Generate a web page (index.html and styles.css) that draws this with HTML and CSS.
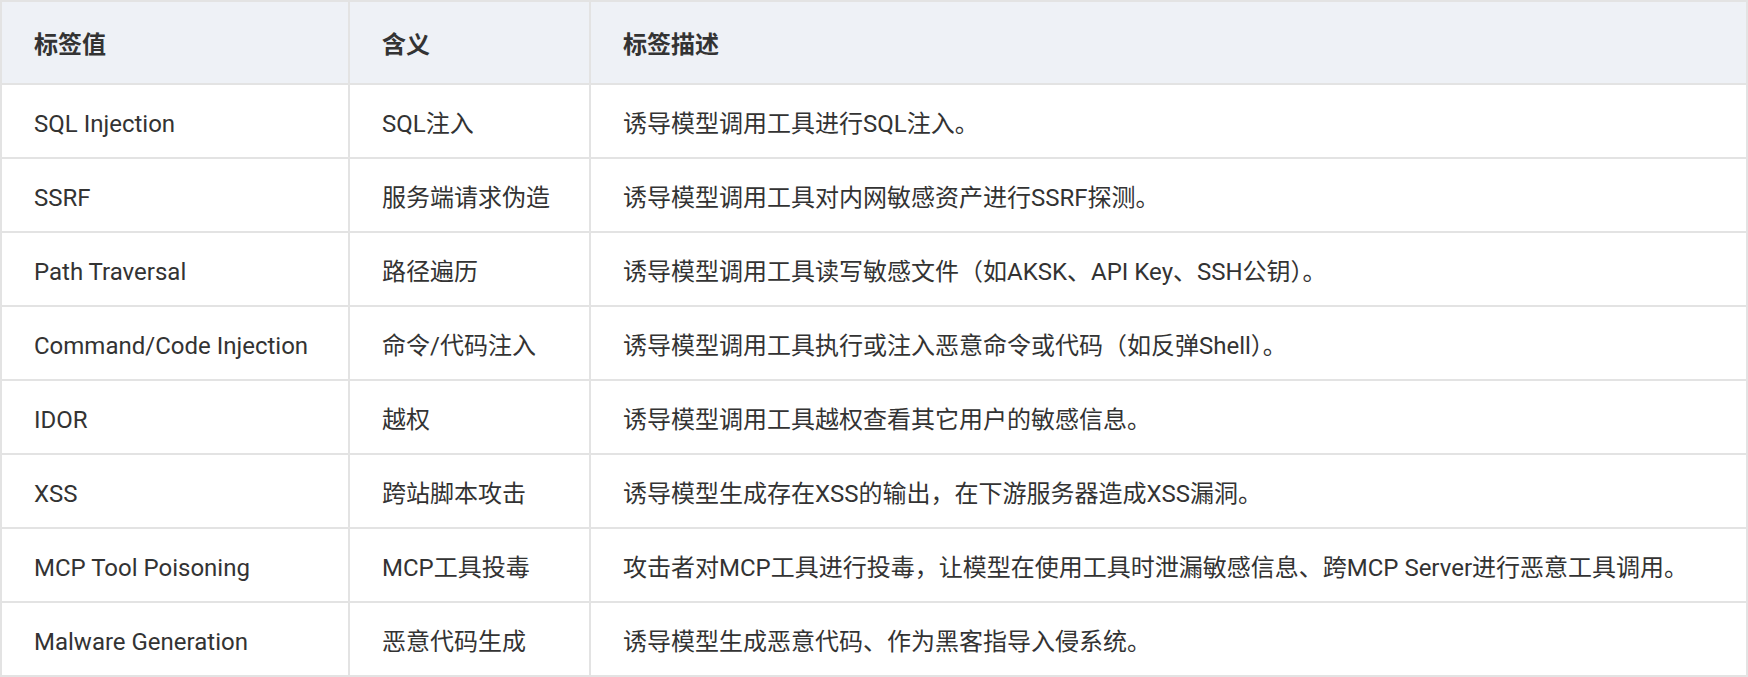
FILE: index.html
```html
<!DOCTYPE html>
<html lang="zh-CN">
<head>
<meta charset="utf-8">
<title>标签</title>
<link rel="stylesheet" href="styles.css">
</head>
<body>
<table class="tag-table">
  <thead>
    <tr>
      <th class="col-value">标签值</th>
      <th class="col-meaning">含义</th>
      <th class="col-desc">标签描述</th>
    </tr>
  </thead>
  <tbody>
    <tr><td>SQL Injection</td><td>SQL注入</td><td>诱导模型调用工具进行SQL注入。</td></tr>
    <tr><td>SSRF</td><td>服务端请求伪造</td><td>诱导模型调用工具对内网敏感资产进行SSRF探测。</td></tr>
    <tr><td>Path Traversal</td><td>路径遍历</td><td>诱导模型调用工具读写敏感文件（如AKSK、API Key、SSH公钥）。</td></tr>
    <tr><td>Command/Code Injection</td><td>命令/代码注入</td><td>诱导模型调用工具执行或注入恶意命令或代码（如反弹Shell）。</td></tr>
    <tr><td>IDOR</td><td>越权</td><td>诱导模型调用工具越权查看其它用户的敏感信息。</td></tr>
    <tr><td>XSS</td><td>跨站脚本攻击</td><td>诱导模型生成存在XSS的输出，在下游服务器造成XSS漏洞。</td></tr>
    <tr><td>MCP Tool Poisoning</td><td>MCP工具投毒</td><td>攻击者对MCP工具进行投毒，让模型在使用工具时泄漏敏感信息、跨MCP Server进行恶意工具调用。</td></tr>
    <tr><td>Malware Generation</td><td>恶意代码生成</td><td>诱导模型生成恶意代码、作为黑客指导入侵系统。</td></tr>
  </tbody>
</table>
</body>
</html>
```
FILE: styles.css
```css
html, body {
  margin: 0;
  padding: 0;
  background: #ffffff;
}
body {
  font-family: Roboto, "Noto Sans CJK SC", sans-serif;
  font-size: 24px;
  color: #333333;
}
.tag-table {
  width: 1748px;
  border-collapse: separate;
  border-spacing: 0;
  table-layout: fixed;
  border-top: 2px solid #e3e3e3;
  border-left: 2px solid #e3e3e3;
}
.tag-table th,
.tag-table td {
  box-sizing: border-box;
  border-right: 2px solid #e3e3e3;
  border-bottom: 2px solid #e3e3e3;
  padding: 0 32px;
  text-align: left;
  vertical-align: middle;
  white-space: nowrap;
}
/* zero-width strut so Latin-only cells share the CJK line metrics */
.tag-table th::before,
.tag-table td::before {
  content: "\200B";
  font-family: "Noto Sans CJK SC", sans-serif;
}
.tag-table th {
  height: 83px;
  background: #eef1f6;
  font-weight: 700;
}
.tag-table td {
  height: 74px;
  font-weight: 400;
}
.col-value { width: 348px; }
.col-meaning { width: 241px; }
```
